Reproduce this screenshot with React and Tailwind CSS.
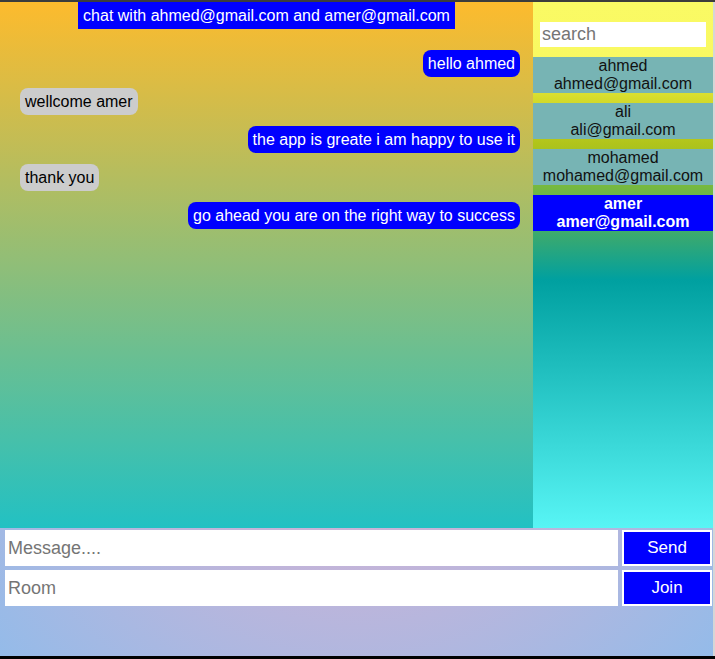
import React, { useState } from 'react';

const messages = [
    { id: 1, text: 'hello ahmed', mine: true },
    { id: 2, text: 'wellcome amer', mine: false },
    { id: 3, text: 'the app is greate i am happy to use it', mine: true },
    { id: 4, text: 'thank you', mine: false },
    { id: 5, text: 'go ahead you are on the right way to success', mine: true },
];

const users = [
    { id: 'u1', name: 'ahmed', email: 'ahmed@gmail.com' },
    { id: 'u2', name: 'ali', email: 'ali@gmail.com' },
    { id: 'u3', name: 'mohamed', email: 'mohamed@gmail.com' },
    { id: 'u4', name: 'amer', email: 'amer@gmail.com' },
];

const App = () => {
    const [search, setSearch] = useState('');
    const [message, setMessage] = useState('');
    const [room, setRoom] = useState('');
    const activeId = 'u4';

    const filtered = users.filter(u =>
        u.name.includes(search) || u.email.includes(search)
    );

    return (
        <div className="w-[715px] h-[659px] bg-black font-['Liberation_Sans',Arial,sans-serif]">
            <div className="h-[2px] bg-[#3c3c3c]" />
            <div className="h-[654px] flex flex-col border-r-2 border-[#d6d6d6] bg-[radial-gradient(circle,#eeaeca_0%,#94bbe9_100%)]">
                <div className="flex h-[526px]">
                    {/* chat panel */}
                    <div className="w-[533px] flex flex-col bg-[linear-gradient(0deg,#22c1c3_0%,#fdbb2d_100%)]">
                        <div className="self-center h-[27px] px-[5px] bg-[#0000ff] text-white text-[16px] leading-[27px]">
                            chat with ahmed@gmail.com and amer@gmail.com
                        </div>
                        <div className="mt-[21px] flex flex-col gap-[11px] pl-[20px] pr-[13px]">
                            {messages.map(m => (
                                <div
                                    key={m.id}
                                    className={
                                        m.mine
                                            ? 'self-end rounded-[8px] px-[5px] py-[4px] text-[16px] leading-[19px] bg-[#0000ff] text-white'
                                            : 'self-start rounded-[8px] px-[5px] py-[4px] text-[16px] leading-[19px] bg-[#cccccc] text-black'
                                    }
                                >
                                    {m.text}
                                </div>
                            ))}
                        </div>
                    </div>

                    {/* users sidebar */}
                    <div className="w-[180px] flex flex-col bg-[linear-gradient(180deg,#fafa64_0px,#f9f962_54px,#d6dc2c_96px,#b0c41a_142px,#72b842_188px,#34a874_238px,#00a0a0_278px,#58f5f5_526px)]">
                        <div className="pt-[20px] px-[7px]">
                            <input
                                value={search}
                                onChange={e => setSearch(e.target.value)}
                                placeholder="search"
                                className="w-full h-[25px] bg-white px-[2px] text-[18px] text-black placeholder:text-[#757575] outline-none"
                            />
                        </div>
                        <div className="mt-[10px] flex flex-col gap-[10px]">
                            {filtered.map(u => (
                                <div
                                    key={u.id}
                                    className={
                                        u.id === activeId
                                            ? 'h-[36px] flex flex-col items-center text-[16px] leading-[18px] bg-[#0000ff] text-white font-bold'
                                            : 'h-[36px] flex flex-col items-center text-[16px] leading-[18px] bg-[#77b4b4] text-[#111]'
                                    }
                                >
                                    <span>{u.name}</span>
                                    <span>{u.email}</span>
                                </div>
                            ))}
                        </div>
                    </div>
                </div>

                {/* inputs */}
                <div className="pt-[2px] pl-[5px] pr-[1px] flex flex-col gap-[4px]">
                    <div className="flex gap-[4px] h-[36px]">
                        <input
                            value={message}
                            onChange={e => setMessage(e.target.value)}
                            placeholder="Message...."
                            className="flex-1 min-w-0 bg-white pl-[3px] text-[18px] text-black placeholder:text-[#757575] outline-none"
                        />
                        <button className="w-[90px] bg-[#0000ff] border-2 border-white text-white text-[17px]">Send</button>
                    </div>
                    <div className="flex gap-[4px] h-[36px]">
                        <input
                            value={room}
                            onChange={e => setRoom(e.target.value)}
                            placeholder="Room"
                            className="flex-1 min-w-0 bg-white pl-[3px] text-[18px] text-black placeholder:text-[#757575] outline-none"
                        />
                        <button className="w-[90px] bg-[#0000ff] border-2 border-white text-white text-[17px]">Join</button>
                    </div>
                </div>
            </div>
            <div className="h-[3px] bg-black" />
        </div>
    );
};

export default App;
